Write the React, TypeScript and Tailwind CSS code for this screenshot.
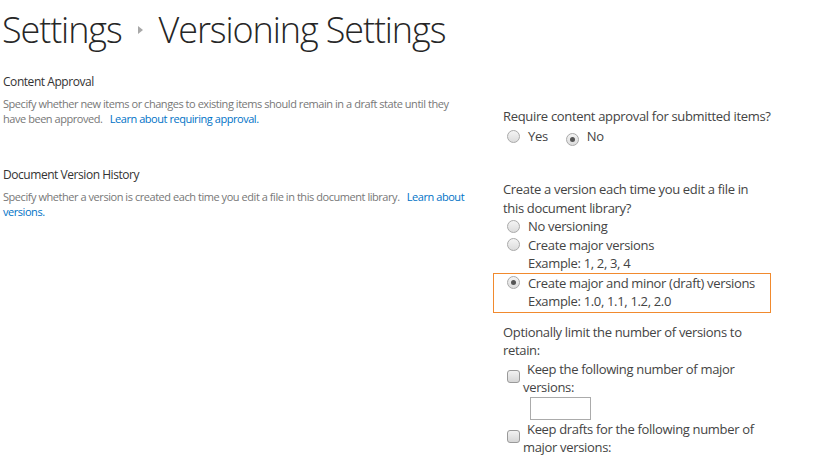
import React from "react";

const font = { fontFamily: '"Segoe UI", "Open Sans", "Noto Sans", sans-serif' };

function Radio({ checked }: { checked?: boolean }) {
  return (
    <span className="inline-flex items-center justify-center w-[13px] h-[13px] rounded-full border border-[#a9a9a9] bg-gradient-to-b from-[#f4f4f4] to-[#dcdcdc] align-[-2px]">
      {checked && <span className="block w-[5px] h-[5px] rounded-full bg-[#555]" />}
    </span>
  );
}

function Checkbox() {
  return (
    <span className="inline-block w-[13px] h-[13px] rounded-[3px] border border-[#9a9a9a] bg-gradient-to-b from-[#f2f2f2] to-[#d6d6d6] align-middle translate-y-[6px]" />
  );
}

export default function App() {
  return (
    <div className="w-[813px] h-[457px] overflow-hidden bg-white text-[#444]" style={font}>
      <div className="flex items-center pl-[2px] pt-[6px] h-[54px] text-[36px] leading-[48px] font-light text-[#262626] tracking-[-1.1px]">
        <span>Settings</span>
        <span className="mx-[16px] w-0 h-0 border-y-[4px] border-y-transparent border-l-[5px] border-l-[#a8a8a8]" />
        <span>Versioning Settings</span>
      </div>

      <div className="flex mt-[18px] h-[94px]">
        <div className="w-[503px] shrink-0 pl-[3px] pt-[1px]">
          <div className="text-[12px] leading-[18px] text-[#333] tracking-[-0.45px]">Content Approval</div>
          <div className="mt-[5px] text-[11px] leading-[15px] text-[#777] tracking-[-0.45px] whitespace-nowrap">
            Specify whether new items or changes to existing items should remain in a draft state until they
            <br />
            have been approved.&nbsp;&nbsp; <span className="text-[#0072c6]">Learn about requiring approval.</span>
          </div>
        </div>
        <div className="pt-[35px] text-[13px] leading-[19px] whitespace-nowrap tracking-[-0.33px]">
          <div>Require content approval for submitted items?</div>
          <div className="flex items-center pl-[4px]">
            <Radio />
            <span className="ml-[8px]">Yes</span>
            <span className="ml-[18px]"><Radio checked /></span>
            <span className="ml-[8px]">No</span>
          </div>
        </div>
      </div>

      <div className="flex">
        <div className="w-[503px] shrink-0 pl-[3px]">
          <div className="text-[12px] leading-[18px] text-[#333] tracking-[-0.45px]">Document Version History</div>
          <div className="mt-[5px] text-[11px] leading-[15px] text-[#777] tracking-[-0.45px] whitespace-nowrap">
            Specify whether a version is created each time you edit a file in this document library.&nbsp;&nbsp; <span className="text-[#0072c6]">Learn about</span>
            <br />
            <span className="text-[#0072c6]">versions.</span>
          </div>
        </div>
        <div className="pt-[14px] text-[13px] leading-[18.5px] whitespace-nowrap tracking-[-0.33px]">
          <div>Create a version each time you edit a file in<br />this document library?</div>
          <div className="pl-[4px]">
            <div className="flex items-center"><Radio /><span className="ml-[8px]">No versioning</span></div>
            <div className="flex items-center"><Radio /><span className="ml-[8px]">Create major versions</span></div>
            <div className="pl-[21px]">Example: 1, 2, 3, 4</div>
          </div>
          <div className="-ml-[10px] w-[278px] border border-[#f18a2e] pl-[13px]">
            <div className="flex items-center"><Radio checked /><span className="ml-[8px]">Create major and minor (draft) versions</span></div>
            <div className="pl-[21px] pb-[1px]">Example: 1.0, 1.1, 1.2, 2.0</div>
          </div>
          <div className="mt-[10px]">Optionally limit the number of versions to<br />retain:</div>
          <div className="pl-[20px]">
            <div>
              <span className="-ml-[16px] mr-[7px]"><Checkbox /></span>
              Keep the following number of major
              <br />
              versions:
            </div>
            <div className="ml-[7px] w-[61px] h-[23px] border border-[#ababab] bg-white" />
            <div>
              <span className="-ml-[16px] mr-[7px]"><Checkbox /></span>
              Keep drafts for the following number of
              <br />
              major versions:
            </div>
          </div>
        </div>
      </div>
    </div>
  );
}
